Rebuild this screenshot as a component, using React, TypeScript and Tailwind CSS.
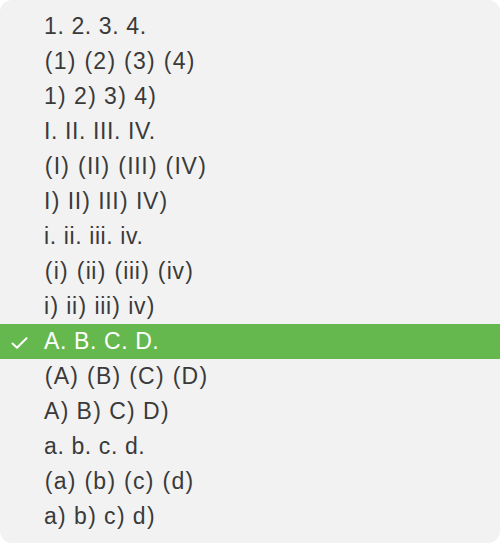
const items = [
  '1. 2. 3. 4.',
  '(1) (2) (3) (4)',
  '1) 2) 3) 4)',
  'I. II. III. IV.',
  '(I) (II) (III) (IV)',
  'I) II) III) IV)',
  'i. ii. iii. iv.',
  '(i) (ii) (iii) (iv)',
  'i) ii) iii) iv)',
  'A. B. C. D.',
  '(A) (B) (C) (D)',
  'A) B) C) D)',
  'a. b. c. d.',
  '(a) (b) (c) (d)',
  'a) b) c) d)',
];

const selected = 'A. B. C. D.';

function Check() {
  return (
    <svg width="17" height="12" viewBox="0 0 17 12" fill="none">
      <path d="M1.5 6.5 L6 10.8 L15.5 1.2" stroke="white" strokeWidth="2" strokeLinecap="round" strokeLinejoin="round" />
    </svg>
  );
}

// parentheses render a bit wider in the original font
function Label({ text }: { text: string }) {
  return (
    <span className="leading-[35px]">
      {text.split('').map((ch, i) =>
        ch === '(' || ch === ')' ? (
          <span key={i} className="px-[0.7px]">{ch}</span>
        ) : (
          <span key={i}>{ch}</span>
        )
      )}
    </span>
  );
}

export default function App() {
  return (
    <div className="w-[500px] h-[543px] bg-white">
      <div className="h-full rounded-[12px] bg-[#f2f2f2] py-[9px] font-['Liberation_Sans',Arial,sans-serif] text-[23px] tracking-[0.6px]">
        {items.map((item) => {
          const active = item === selected;
          return (
            <div
              key={item}
              className={
                active
                  ? 'flex items-center h-[35px] bg-[#64b84e] text-white'
                  : 'flex items-center h-[35px] text-[#3a3a3a]'
              }
            >
              <div className="w-[44px] flex items-center pl-[11px] pt-[2px]">{active && <Check />}</div>
              <Label text={item} />
            </div>
          );
        })}
      </div>
    </div>
  );
}
